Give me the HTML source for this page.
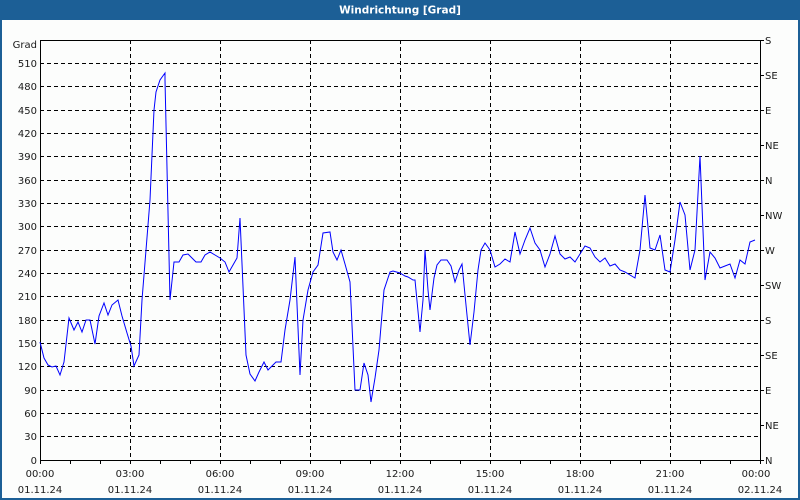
<!DOCTYPE html>
<html><head><meta charset="utf-8"><style>
html,body{margin:0;padding:0;width:800px;height:500px;overflow:hidden;background:#fff}
svg{display:block}
text{font-family:"DejaVu Sans","Liberation Sans",sans-serif;font-size:10px;fill:#1a1a1a}
</style></head><body>
<svg width="800" height="500" viewBox="0 0 800 500" xmlns="http://www.w3.org/2000/svg">
<rect x="0" y="0" width="800" height="500" fill="#1c5f96"/>
<rect x="2" y="20" width="796" height="478" fill="#fcfdfc"/>
<text x="400" y="13.5" text-anchor="middle" style="fill:#fff;font-weight:bold;font-size:10.5px">Windrichtung [Grad]</text>
<g stroke="#000" stroke-width="1" stroke-dasharray="4,3" fill="none">
<path d="M40 63.5H760M40 86.5H760M40 110.5H760M40 133.5H760M40 156.5H760M40 180.5H760M40 203.5H760M40 226.5H760M40 250.5H760M40 273.5H760M40 296.5H760M40 320.5H760M40 343.5H760M40 366.5H760M40 390.5H760M40 413.5H760M40 436.5H760"/>
<path d="M130.5 40V460M220.5 40V460M310.5 40V460M400.5 40V460M490.5 40V460M580.5 40V460M670.5 40V460"/>
</g>
<g stroke="#000" stroke-width="1" fill="none">
<path d="M40.5 40V460.5H760.5V40.5H40"/>
<path d="M760 40.5h4M760 75.5h4M760 110.5h4M760 145.5h4M760 180.5h4M760 215.5h4M760 250.5h4M760 285.5h4M760 320.5h4M760 355.5h4M760 390.5h4M760 425.5h4M760 460.5h4"/>
<path d="M40.5 460v4M70.5 460v4M100.5 460v4M130.5 460v4M160.5 460v4M190.5 460v4M220.5 460v4M250.5 460v4M280.5 460v4M310.5 460v4M340.5 460v4M370.5 460v4M400.5 460v4M430.5 460v4M460.5 460v4M490.5 460v4M520.5 460v4M550.5 460v4M580.5 460v4M610.5 460v4M640.5 460v4M670.5 460v4M700.5 460v4M730.5 460v4M760.5 460v4"/>
</g>
<g text-anchor="end">
<text x="37" y="48">Grad</text>
<text x="37" y="67">510</text><text x="37" y="90">480</text><text x="37" y="114">450</text><text x="37" y="137">420</text><text x="37" y="160">390</text><text x="37" y="184">360</text><text x="37" y="207">330</text><text x="37" y="230">300</text><text x="37" y="254">270</text><text x="37" y="277">240</text><text x="37" y="300">210</text><text x="37" y="324">180</text><text x="37" y="347">150</text><text x="37" y="370">120</text><text x="37" y="394">90</text><text x="37" y="417">60</text><text x="37" y="440">30</text><text x="37" y="464">0</text>
</g>
<g>
<text x="765" y="44">S</text><text x="765" y="79">SE</text><text x="765" y="114">E</text><text x="765" y="149">NE</text><text x="765" y="184">N</text><text x="765" y="219">NW</text><text x="765" y="254">W</text><text x="765" y="289">SW</text><text x="765" y="324">S</text><text x="765" y="359">SE</text><text x="765" y="394">E</text><text x="765" y="429">NE</text><text x="765" y="464">N</text>
</g>
<g text-anchor="middle">
<text x="40" y="477">00:00</text><text x="130" y="477">03:00</text><text x="220" y="477">06:00</text><text x="310" y="477">09:00</text><text x="400" y="477">12:00</text><text x="490" y="477">15:00</text><text x="580" y="477">18:00</text><text x="670" y="477">21:00</text><text x="756" y="477">00:00</text>
<text x="40" y="493">01.11.24</text><text x="130" y="493">01.11.24</text><text x="220" y="493">01.11.24</text><text x="310" y="493">01.11.24</text><text x="400" y="493">01.11.24</text><text x="490" y="493">01.11.24</text><text x="580" y="493">01.11.24</text><text x="670" y="493">01.11.24</text><text x="760" y="493">02.11.24</text>
</g>
<polyline fill="none" stroke="#0000ff" stroke-width="1" points="40,342 44,358 48,365 52,367 56,366 60,375 64,362 69,318 74,330 78,322 82,332 86,320 90,320 95,344 99,316 104,303 108,315 112,305 118,300 122,316 127,333 131,346 134,366 139,355 142,300 146,250 150,200 154,110 156,92 160,80 165,73 165,80 170,300 174,262 179,262 183,255 188,254 192,258 196,262 201,262 205,255 210,252 215,255 220,258 225,262 229,272 233,265 237,258 240,218 246,355 250,374 255,381 259,372 264,362 268,370 272,366 276,362 281,362 285,330 290,300 295,257 300,375 303,320 308,290 313,272 318,265 323,233 330,232 333,252 337,260 341,250 345,264 350,282 355,390 360,390 364,363 368,375 371,402 375,378 379,350 384,290 390,272 393,271 400,273 405,276 408,277 413,280 415,280 420,332 423,300 425,250 428,290 430,310 434,278 437,265 441,260 447,260 451,266 455,282 459,270 462,264 466,305 470,345 474,312 478,270 481,250 485,243 490,250 495,267 500,264 505,259 510,262 515,232 520,254 525,240 530,228 535,243 540,250 545,267 550,254 555,236 560,254 565,259 570,257 575,262 580,254 585,246 590,248 595,257 600,262 605,258 610,266 615,264 620,270 625,272 630,275 635,278 640,250 645,195 650,248 655,250 660,235 665,270 670,272 675,240 680,202 685,215 690,270 695,250 700,156 705,280 710,252 715,258 720,268 725,266 730,264 735,278 740,260 745,264 750,242 755,240"/>
</svg>
</body></html>
